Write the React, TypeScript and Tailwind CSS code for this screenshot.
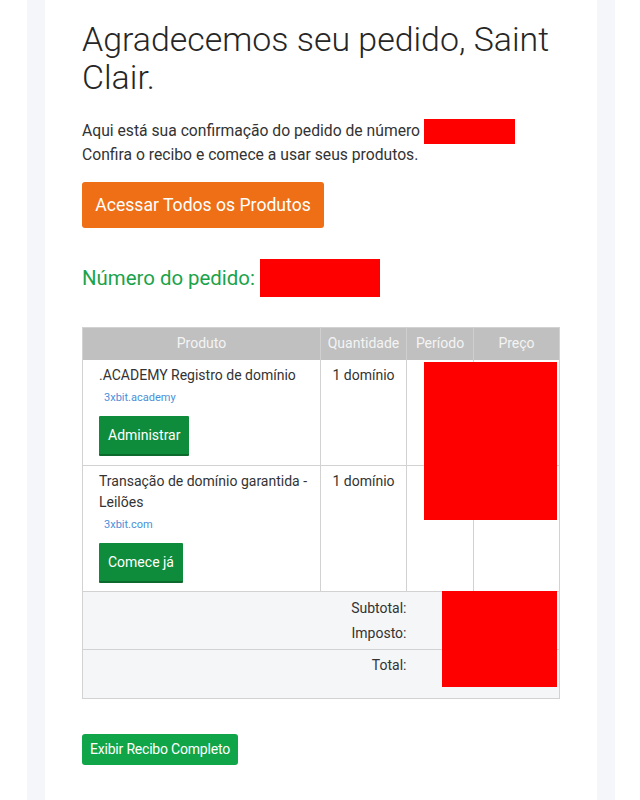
const products = [
  {
    name: '.ACADEMY Registro de domínio',
    domain: '3xbit.academy',
    action: 'Administrar',
    height: 'h-[106px]',
  },
  {
    name: 'Transação de domínio garantida - Leilões',
    domain: '3xbit.com',
    action: 'Comece já',
    height: 'h-[126px]',
  },
];

function Redacted({ className }: { className: string }) {
  return <span className={`inline-block bg-[#ff0000] align-middle ${className}`} />;
}

export default function App() {
  return (
    <div className="min-h-[800px] w-[640px] bg-white font-['Roboto','Liberation_Sans',sans-serif] text-[#333333]">
      <div className="ml-[27px] min-h-[800px] w-[588px] bg-[#f5f6fa] px-[18px]">
        <div className="min-h-[800px] bg-white pl-[37px] pr-[38px] pt-[21px]">
          <h1 className="text-[33.9px] font-light leading-[38px] text-[#262626]">
            Agradecemos seu pedido, Saint Clair.
          </h1>

          <p className="mt-[22px] text-[15.7px] leading-[22px]">
            Aqui está sua confirmação do pedido de número <Redacted className="h-[25px] w-[91px]" />
            <br />
            Confira o recibo e comece a usar seus produtos.
          </p>

          <button className="mt-[16px] flex h-[46px] w-[242px] items-center justify-center rounded-[3px] bg-[#ef6f17] text-[17.6px] text-white">
            Acessar Todos os Produtos
          </button>

          <div className="mt-[31px] flex items-center text-[20.4px] text-[#1aa34a]">
            <span>Número do pedido:</span>
            <Redacted className="ml-[5px] h-[38px] w-[120px]" />
          </div>

          <div className="relative mt-[30px] w-[477px]">
            <table className="w-[477px] table-fixed border-collapse border border-[#d2d2d2] text-[14px]">
              <colgroup>
                <col className="w-[238px]" />
                <col className="w-[86px]" />
                <col className="w-[67px]" />
                <col className="w-[86px]" />
              </colgroup>
              <thead>
                <tr className="h-[32px] bg-[#c0c0c0] text-[14px] font-normal text-[#f4f4f4]">
                  <th className="border-r border-[#cfcfcf] font-normal">Produto</th>
                  <th className="border-r border-[#cfcfcf] font-normal">Quantidade</th>
                  <th className="border-r border-[#cfcfcf] font-normal">Período</th>
                  <th className="font-normal">Preço</th>
                </tr>
              </thead>
              <tbody>
                {products.map((p) => (
                  <tr key={p.domain} className={`${p.height} border-b border-[#d2d2d2] align-top`}>
                    <td className="border-r border-[#d2d2d2] pl-[16px] pr-[10px] pt-[5px]">
                      <div className="leading-[21px]">{p.name}</div>
                      <div className="mt-[2px] pl-[5px] text-[11px] leading-[20px] text-[#4a8fd8]">{p.domain}</div>
                      <button className="mt-[8px] rounded-[1px] border-b-2 border-[#0b6a2c] bg-[#0f8c3b] px-[9px] pb-[9px] pt-[9px] text-[14px] leading-[20px] text-white">
                        {p.action}
                      </button>
                    </td>
                    <td className="border-r border-[#d2d2d2] pt-[5px] text-center leading-[21px]">1 domínio</td>
                    <td className="border-r border-[#d2d2d2]" />
                    <td />
                  </tr>
                ))}
                <tr className="bg-[#f5f6f8]">
                  <td colSpan={2} className="pb-[3px] pt-[4px] text-right leading-[25px]">
                    Subtotal:
                    <br />
                    Imposto:
                  </td>
                  <td colSpan={2} />
                </tr>
                <tr className="border-t border-[#d2d2d2] bg-[#f5f6f8]">
                  <td colSpan={2} className="pb-[20px] pt-[3px] text-right leading-[25px]">
                    Total:
                  </td>
                  <td colSpan={2} />
                </tr>
              </tbody>
            </table>
            <div className="absolute left-[342px] top-[35px] h-[158px] w-[133px] bg-[#ff0000]" />
            <div className="absolute left-[360px] top-[264px] h-[96px] w-[115px] bg-[#ff0000]" />
          </div>

          <button className="mt-[35px] flex h-[31px] w-[156px] items-center justify-center rounded-[3px] bg-[#0fa548] text-[14px] tracking-[-0.2px] text-white">
            Exibir Recibo Completo
          </button>
        </div>
      </div>
    </div>
  );
}
